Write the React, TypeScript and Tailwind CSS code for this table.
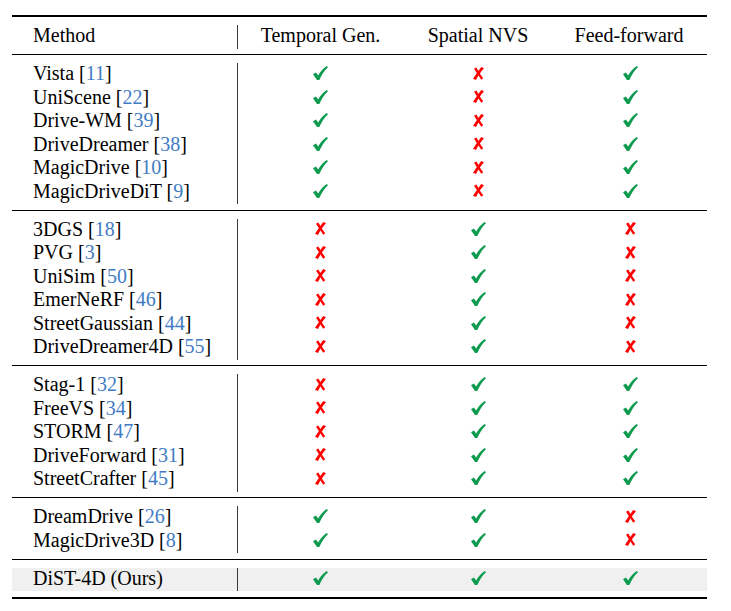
import React from "react";

type Mark = boolean;
type Row = { name: string; cite?: string; marks: [Mark, Mark, Mark] };

const blocks: Row[][] = [
  [
    { name: "Vista", cite: "11", marks: [true, false, true] },
    { name: "UniScene", cite: "22", marks: [true, false, true] },
    { name: "Drive-WM", cite: "39", marks: [true, false, true] },
    { name: "DriveDreamer", cite: "38", marks: [true, false, true] },
    { name: "MagicDrive", cite: "10", marks: [true, false, true] },
    { name: "MagicDriveDiT", cite: "9", marks: [true, false, true] },
  ],
  [
    { name: "3DGS", cite: "18", marks: [false, true, false] },
    { name: "PVG", cite: "3", marks: [false, true, false] },
    { name: "UniSim", cite: "50", marks: [false, true, false] },
    { name: "EmerNeRF", cite: "46", marks: [false, true, false] },
    { name: "StreetGaussian", cite: "44", marks: [false, true, false] },
    { name: "DriveDreamer4D", cite: "55", marks: [false, true, false] },
  ],
  [
    { name: "Stag-1", cite: "32", marks: [false, true, true] },
    { name: "FreeVS", cite: "34", marks: [false, true, true] },
    { name: "STORM", cite: "47", marks: [false, true, true] },
    { name: "DriveForward", cite: "31", marks: [false, true, true] },
    { name: "StreetCrafter", cite: "45", marks: [false, true, true] },
  ],
  [
    { name: "DreamDrive", cite: "26", marks: [true, true, false] },
    { name: "MagicDrive3D", cite: "8", marks: [true, true, false] },
  ],
];

const ours: Row = { name: "DiST-4D (Ours)", marks: [true, true, true] };

function Check() {
  return (
    <svg width="15" height="14" viewBox="0 0 15 14" className="mb-[3px]">
      <path
        d="M0 8.2 L2.9 6.5 L5.2 9.4 C7.2 5.6 10 2.3 13.7 0 L15 1.3 C11.5 4.5 8.8 8.6 6.3 14 L4 14 Z"
        fill="#0e9a4f"
      />
    </svg>
  );
}

function Cross() {
  return (
    <svg width="11" height="13" viewBox="0 0 11 13" className="mb-[3px]">
      <path d="M8.2 0 L11 1.3 C8.2 4.4 5.4 8.3 3 13 L0 11.8 C2.8 7.8 5.3 3.8 8.2 0 Z" fill="#ff0000" />
      <path d="M1 1.8 L3.4 0.4 C5.5 4 7.6 7.8 10.2 11.2 L8.3 12.8 C5.8 9.4 3.5 5.4 1 1.8 Z" fill="#ff0000" />
    </svg>
  );
}

const grid = "grid grid-cols-[225px_1px_165px_150px_155px] h-[23.5px] leading-[20px]";

function TableRow({ row, shaded }: { row: Row; shaded?: boolean }) {
  return (
    <div className={`${grid} ${shaded ? "bg-[#f0f0f0]" : ""}`}>
      <div className="pl-[21px] whitespace-nowrap">
        {row.name}
        {row.cite && (
          <>
            {" "}[<span className="text-[#3f7cc4]">{row.cite}</span>]
          </>
        )}
      </div>
      <div className="bg-[#3a3a3a]" />
      {row.marks.map((m, k) => (
        <div key={k} className="flex items-center justify-center">
          {m ? <Check /> : <Cross />}
        </div>
      ))}
    </div>
  );
}

function Block({ children }: { children: React.ReactNode }) {
  return <div className="pt-[8px] pb-[5.5px]">{children}</div>;
}

const Rule = () => <div className="h-px bg-black" />;

export default function App() {
  return (
    <div
      className="w-[731px] h-[611px] bg-white pt-[15px] pl-[12px] text-black text-[20px]"
      style={{ fontFamily: '"Liberation Serif", "Times New Roman", serif' }}
    >
      <div className="w-[695px]">
        <div className="h-[2px] bg-black" />
        <Block>
          <div className={grid}>
            <div className="pl-[21px]">Method</div>
            <div className="bg-[#3a3a3a]" />
            <div className="text-center">Temporal Gen.</div>
            <div className="text-center">Spatial NVS</div>
            <div className="text-center pr-[3px]">Feed-forward</div>
          </div>
        </Block>
        <Rule />
        {blocks.map((rows, b) => (
          <React.Fragment key={b}>
            <Block>
              {rows.map((r) => (
                <TableRow key={r.name} row={r} />
              ))}
            </Block>
            <Rule />
          </React.Fragment>
        ))}
        <Block>
          <TableRow row={ours} shaded />
        </Block>
        <div className="h-[2.5px] bg-black" />
      </div>
    </div>
  );
}
